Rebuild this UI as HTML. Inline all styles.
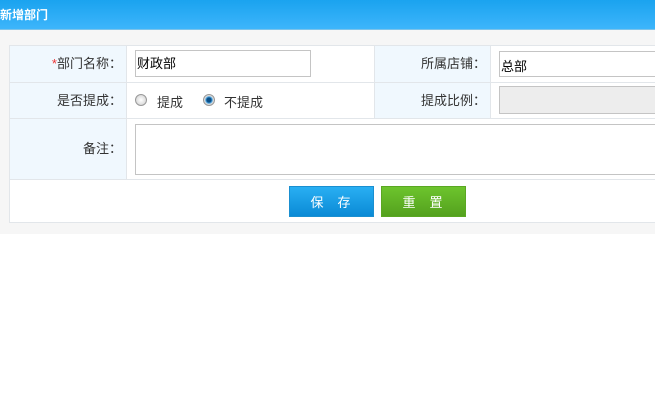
<!DOCTYPE html>
<html><head><meta charset="utf-8"><style>
*{margin:0;padding:0;box-sizing:border-box}
body{width:655px;height:413px;background:#fff;font-family:"Liberation Sans","Noto Sans CJK SC",sans-serif;font-size:12px;color:#333;position:relative;overflow:hidden}
.hd{position:absolute;left:0;top:0;width:655px;height:30px;background:linear-gradient(#1aa3ef,#3db5fb);border-bottom:1px solid #7cc3ea;color:#fff;font-weight:bold;line-height:30px;font-size:12px}
.bg{position:absolute;left:0;top:30px;width:655px;height:204px;background:#f6f6f6}
.c{position:absolute;border-right:1px solid #e2e6ea;border-bottom:1px solid #e2e6ea;background:#fff}
.l{background:#f0f8fe;text-align:right;padding-right:4px;font-size:13px}
.in{position:absolute;border:1px solid #c4c4c4;background:#fff;font-size:13px;color:#000;padding-left:1px}
.r{position:absolute;width:12px;height:12px;border-radius:50%;border:1px solid #999;background:radial-gradient(#fff,#ccc)}
.btn{position:absolute;top:186px;width:85px;height:31px;color:#fff;text-align:center;line-height:31px;font-size:13px;letter-spacing:14px;padding-left:12px}
</style></head><body>
<div class="hd">新增部门</div>
<div class="bg"></div>
<div style="position:absolute;left:9px;top:45px;width:646px;height:178px;border:1px solid #e2e6ea;border-right:none;background:#fff"></div>
<div class="c l" style="left:10px;top:46px;width:117px;height:37px;line-height:36px"><span style="color:#e33;">*</span>部门名称：</div>
<div class="c" style="left:127px;top:46px;width:248px;height:37px"></div>
<div class="c l" style="left:375px;top:46px;width:116px;height:37px;line-height:36px">所属店铺：</div>
<div class="c" style="left:491px;top:46px;width:164px;height:37px;border-right:none"></div>
<div class="c l" style="left:10px;top:83px;width:117px;height:36px;line-height:35px">是否提成：</div>
<div class="c" style="left:127px;top:83px;width:248px;height:36px"></div>
<div class="c l" style="left:375px;top:83px;width:116px;height:36px;line-height:35px">提成比例：</div>
<div class="c" style="left:491px;top:83px;width:164px;height:36px;border-right:none"></div>
<div class="c l" style="left:10px;top:119px;width:117px;height:61px;line-height:60px">备注：</div>
<div class="c" style="left:127px;top:119px;width:528px;height:61px;border-right:none"></div>
<div class="in" style="left:135px;top:50px;width:176px;height:27px;line-height:25px">财政部</div>
<div class="in" style="left:499px;top:51px;width:160px;height:26px;line-height:30px">总部</div>
<div class="in" style="left:499px;top:86px;width:160px;height:28px;background:#ededed"></div>
<div class="in" style="left:135px;top:124px;width:525px;height:51px"></div>
<div class="r" style="left:135px;top:94px"></div>
<span style="position:absolute;left:157px;top:92px;font-size:13px">提成</span>
<div class="r" style="left:203px;top:94px;background:radial-gradient(#0b4f87 30%,#4aa3e0 45%,#ddd 60%)"></div>
<span style="position:absolute;left:224px;top:92px;font-size:13px">不提成</span>
<div class="btn" style="left:289px;background:linear-gradient(#29aff3,#0a8ad6);border:1px solid #1a8fd0">保存</div>
<div class="btn" style="left:381px;background:linear-gradient(#6dc42d,#54a11e);border:1px solid #5aa722">重置</div>
</body></html>
